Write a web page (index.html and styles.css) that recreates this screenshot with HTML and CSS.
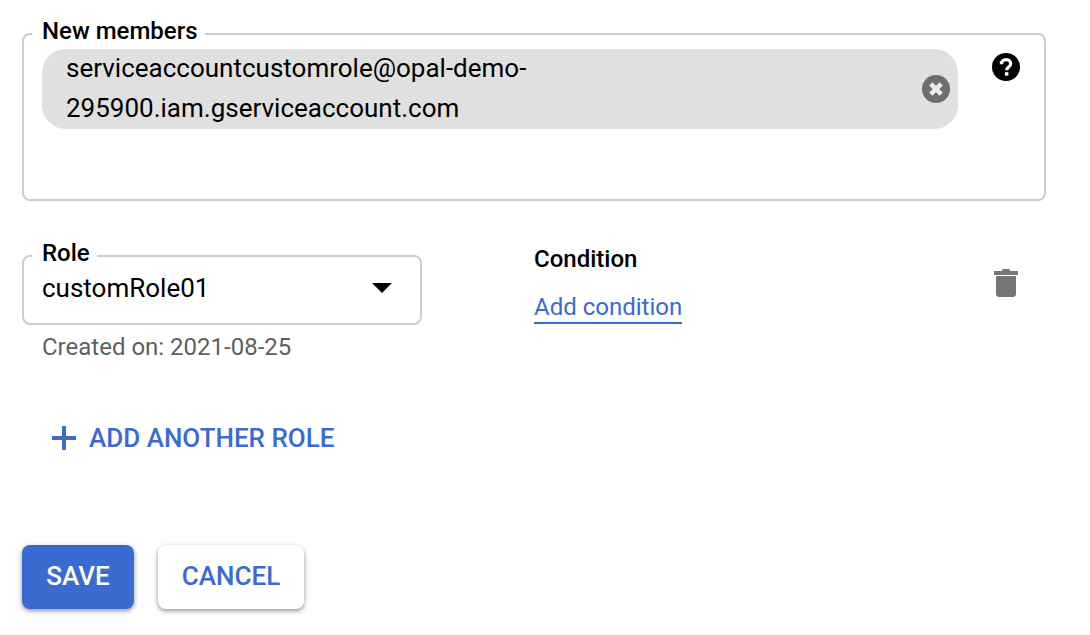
FILE: index.html
```html
<!DOCTYPE html>
<html lang="en">
<head>
<meta charset="utf-8">
<title>Add members</title>
<link rel="stylesheet" href="styles.css">
</head>
<body>
<main class="page">
  <fieldset class="outline members">
    <legend class="legend">New members</legend>
    <div class="members-row">
      <div class="chip">
        <span class="chip-text">serviceaccountcustomrole@opal-demo-295900.iam.gserviceaccount.com</span>
        <svg class="chip-close" viewBox="0 0 28 28" width="28" height="28"><circle cx="14" cy="14" r="14" fill="#6e6e6e"/><path d="M8.800 8.800l10.400 10.400M19.200 8.800L8.800 19.200" stroke="#ebebeb" stroke-width="4.600" fill="none"/></svg>
      </div>
      <svg class="help" viewBox="0 0 28 28" width="28" height="28"><circle cx="14" cy="14" r="14" fill="#000"/><path d="M9.400 11.200c0-2.900 2.100-4.600 4.700-4.600s4.600 1.700 4.600 4.100c0 3.400-4 3.300-4 6.500" stroke="#fff" stroke-width="3.300" fill="none"/><rect x="12.900" y="19.200" width="3.500" height="3.400" fill="#fff"/></svg>
    </div>
  </fieldset>

  <section class="role-row">
    <div class="role-col">
      <fieldset class="outline role">
        <legend class="legend">Role</legend>
        <div class="select">
          <span>customRole01</span>
          <span class="caret"></span>
        </div>
      </fieldset>
      <p class="hint">Created on: 2021-08-25</p>
    </div>
    <div class="condition">
      <h3 class="condition-title">Condition</h3>
      <a class="link" href="#">Add condition</a>
    </div>
    <svg class="trash" viewBox="0 0 24 28" width="24" height="28"><path fill="#757575" d="M2 7h20v18c0 1.700-1.300 3-3 3H5c-1.700 0-3-1.300-3-3zM0 2h7.500l1.500-2h6l1.500 2H24v4H0z"/></svg>
  </section>

  <div class="add-role">
    <svg class="plus" viewBox="0 0 24 24" width="24" height="24"><path fill="#3b6ad1" d="M10 0h4v10h10v4H14v10h-4V14H0v-4h10z"/></svg>
    <span>ADD ANOTHER ROLE</span>
  </div>

  <div class="actions">
    <button class="btn primary">SAVE</button>
    <button class="btn secondary">CANCEL</button>
  </div>
</main>
</body>
</html>
```

FILE: styles.css
```css
* { box-sizing: border-box; }
html, body { margin: 0; background: #fff; }
body {
  width: 1090px;
  height: 635px;
  overflow: hidden;
  font-family: Roboto, "Liberation Sans", sans-serif;
  color: #000;
}
.page {
  width: 1024px;
  margin-left: 22px;
  padding-top: 19px;
}
.outline {
  margin: 0;
  padding: 0 18px;
  border: 2px solid #cccccc;
  border-radius: 8px;
  min-width: 0;
}
.legend {
  padding: 0 7px 6px 10px;
  margin-left: -10px;
  font-size: 24px;
  font-weight: 500;
  line-height: 24px;
  height: 30px;
}
.members { height: 182px; }
.members-row {
  display: flex;
  align-items: flex-start;
}
.chip {
  width: 916px;
  height: 80px;
  flex: none;
  display: flex;
  align-items: center;
  background: #e0e0e0;
  border-radius: 24px;
  padding: 0 8px 0 24px;
}
.chip-text {
  flex: 1;
  max-width: 480px;
  margin-bottom: 2px;
  font-size: 26px;
  line-height: 40px;
  overflow-wrap: anywhere;
}
.chip-close { margin-left: auto; flex: none; }
.help { margin: 4px 0 0 34px; flex: none; }
.role-row {
  display: flex;
  align-items: flex-start;
  margin-top: 40px;
}
.role-col { width: 400px; flex: none; }
.role { height: 84px; }
.select {
  display: flex;
  align-items: center;
  justify-content: space-between;
  height: 34px;
  font-size: 26px;
  padding-right: 10px;
}
.caret {
  width: 0;
  height: 0;
  border-left: 10px solid transparent;
  border-right: 10px solid transparent;
  border-top: 10px solid #000;
}
.hint {
  margin: 7px 0 0 20px;
  font-size: 24px;
  line-height: 30px;
  color: #5f5f5f;
}
.condition {
  margin-left: 112px;
  width: 460px;
  flex: none;
  padding-top: 4px;
}
.condition-title {
  margin: 0;
  font-size: 24px;
  font-weight: 500;
  line-height: 28px;
}
.link {
  display: inline-block;
  margin-top: 20px;
  font-size: 24px;
  line-height: 29px;
  color: #3b6ad1;
  text-decoration: none;
  border-bottom: 2px solid #3b6ad1;
}
.trash { margin-top: 28px; flex: none; }
.add-role {
  display: flex;
  align-items: center;
  gap: 13px;
  margin: 60px 0 0 30px;
  height: 32px;
  font-size: 26px;
  font-weight: 500;
  color: #3b6ad1;
}
.actions {
  display: flex;
  gap: 24px;
  margin-top: 91px;
}
.btn {
  height: 64px;
  border: 0;
  border-radius: 8px;
  font-family: inherit;
  font-size: 26px;
  font-weight: 500;
  padding: 0 0 2px;
  box-shadow: 0 2px 4px rgba(0,0,0,.3), 0 2px 6px rgba(0,0,0,.15);
}
.primary { width: 112px; background: #3b6ad1; color: #fff; }
.secondary { width: 146px; background: #fff; color: #3b6ad1; }
```
